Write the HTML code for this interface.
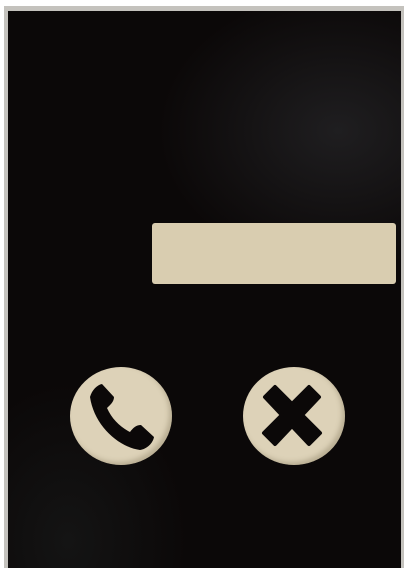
<!DOCTYPE html>
<html><head><style>
html,body{margin:0;padding:0;width:404px;height:568px;overflow:hidden;background:#fff}
.frame{position:absolute;left:4px;top:6px;width:400px;height:562px;background:#c4c2bd}
.panel{position:absolute;left:8px;top:11px;width:393px;height:557px;
background:radial-gradient(ellipse 180px 140px at 330px 120px,#1f1e20,transparent),radial-gradient(ellipse 120px 160px at 60px 530px,#141414,transparent),#0b0808}
.bar{position:absolute;left:152px;top:223px;width:244px;height:61px;background:#d9cdb0;border-radius:3px}
.c{position:absolute;width:102px;height:98px;border-radius:50%;background:#ddd2b8;box-shadow:inset -3px -3px 5px rgba(120,110,80,.35)}
</style></head><body>
<div class="frame"></div>
<div class="panel"></div>
<div class="bar"></div>
<div class="c" style="left:70px;top:367px">
<svg width="102" height="98" viewBox="0 0 102 98"><path d="M20 30 C22 23 27 18 32 17 L44 30 C44 35 40 38 37 41 C42 52 50 60 60 65 C63 61 66 58 71 58 L84 70 C83 76 77 82 70 83 C48 80 24 58 20 30 Z" fill="#0b0808"/></svg>
</div>
<div class="c" style="left:243px;top:367px">
<svg width="98" height="98" viewBox="0 0 98 98"><path d="M22 30 L32 20 L49 37 L66 20 L76 30 L59 48 L77 66 L66 77 L49 59 L32 77 L21 66 L39 48 Z" fill="#0b0808" stroke="#0b0808" stroke-width="4" stroke-linejoin="round"/></svg>
</div>
</body></html>
